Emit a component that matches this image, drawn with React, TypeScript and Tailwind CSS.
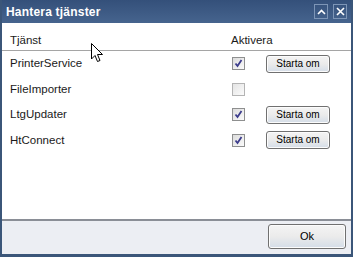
import React from 'react';

const services = [
  { name: 'PrinterService', active: true },
  { name: 'FileImporter', active: false },
  { name: 'LtgUpdater', active: true },
  { name: 'HtConnect', active: true },
];

function CheckBox({ checked }: { checked: boolean }) {
  return (
    <div
      className={
        checked
          ? 'w-[13px] h-[13px] border border-[#8e8f8f] bg-gradient-to-br from-[#dcdcdc] to-[#fbfbfb] flex items-center justify-center'
          : 'w-[13px] h-[13px] border border-[#b4b4b4] bg-gradient-to-br from-[#e4e4e4] to-[#fbfbfb]'
      }
    >
      {checked && (
        <svg width="9" height="9" viewBox="0 0 9 9">
          <path d="M1.5 4.5 L3.5 7 L7.5 1" fill="none" stroke="#3c3c8c" strokeWidth="1.8" />
        </svg>
      )}
    </div>
  );
}

function Button({ label, className }: { label: string; className: string }) {
  return (
    <button
      className={
        'rounded-[3px] border border-[#707070] bg-gradient-to-b from-[#f4f4f4] via-[#ebebeb] to-[#d4dde8] text-black shadow-[inset_0_0_0_1px_#fcfcfc] ' +
        className
      }
    >
      {label}
    </button>
  );
}

function Cursor() {
  return (
    <svg className="absolute left-[91px] top-[43px]" width="13" height="20" viewBox="0 0 13 20">
      <path d="M0.5 0.5 L0.5 16 L4 12.5 L6.5 18.5 L9 17.5 L6.5 11.5 L11.5 11.5 Z" fill="#ffffff" stroke="#000000" strokeWidth="1" />
    </svg>
  );
}

export default function App() {
  return (
    <div className="relative w-[353px] h-[257px] bg-[#3b5679] px-[2px] pb-[3px] flex flex-col font-['Liberation_Sans',Arial,sans-serif]">
      <div className="h-[23px] shrink-0 flex items-center pl-[4px] pr-[4px] bg-gradient-to-b from-[#34507a] to-[#46648e]">
        <span className="text-white font-bold text-[12px] tracking-[0.2px]">Hantera tjänster</span>
        <div className="ml-auto flex gap-[5px]">
          <div className="w-[14px] h-[15px] border border-[#7d95b6] flex items-center justify-center">
            <svg width="9" height="6" viewBox="0 0 9 6">
              <path d="M1 5 L4.5 1.5 L8 5" fill="none" stroke="#ffffff" strokeWidth="1.6" />
            </svg>
          </div>
          <div className="w-[14px] h-[15px] border border-[#7d95b6] flex items-center justify-center">
            <svg width="9" height="9" viewBox="0 0 9 9">
              <path d="M1 1 L8 8 M8 1 L1 8" fill="none" stroke="#ffffff" strokeWidth="1.6" />
            </svg>
          </div>
        </div>
      </div>

      <div className="flex-1 bg-white flex flex-col text-[11.5px] text-[#1a1a1a]">
        <div className="h-[28px] shrink-0 flex items-end pb-[1px] border-b border-[#a5a5a5]">
          <span className="pl-[8px] w-[229px]">Tjänst</span>
          <span>Aktivera</span>
        </div>
        {services.map(s => (
          <div key={s.name} className="h-[25.5px] flex items-center first:mt-[3.5px]">
            <span className="pl-[8px] w-[230px]">{s.name}</span>
            <CheckBox checked={s.active} />
            {s.active && <Button label="Starta om" className="ml-[21px] w-[64px] h-[18px] text-[10px] leading-none" />}
          </div>
        ))}
      </div>

      <div className="h-[35px] shrink-0 border-t-2 border-[#8a8e96] bg-[#eceef3] flex items-start justify-end pt-[3px] pr-[5px]">
        <Button label="Ok" className="w-[78px] h-[25px] text-[11px]" />
      </div>
      <Cursor />
    </div>
  );
}
